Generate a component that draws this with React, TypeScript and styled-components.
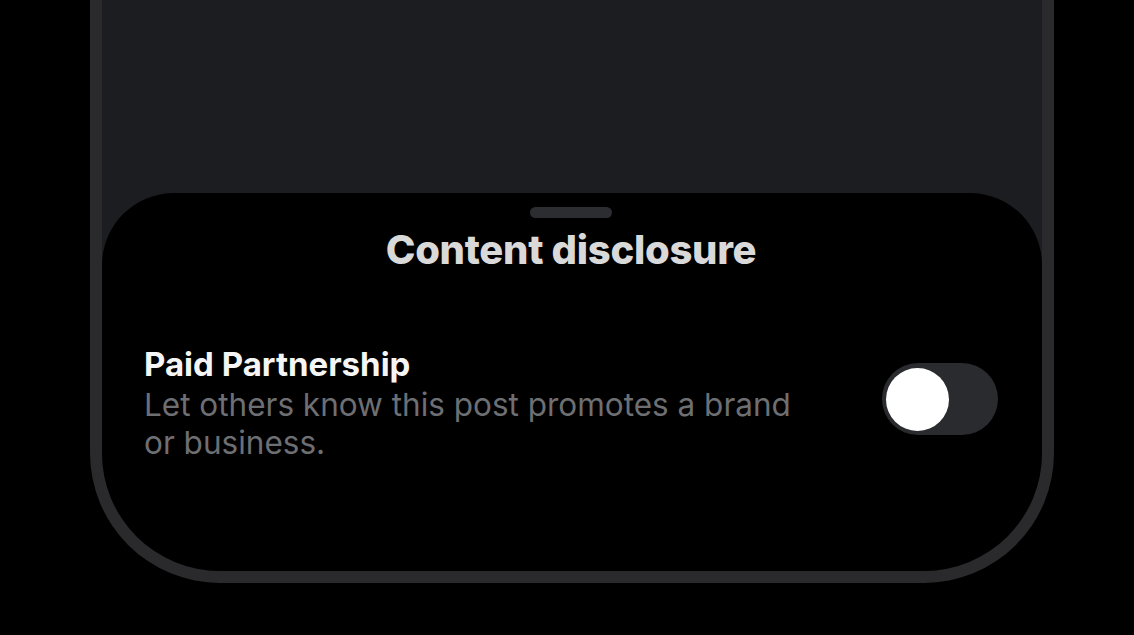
import React, { useState } from "react";
import styled, { createGlobalStyle } from "styled-components";

const GlobalStyle = createGlobalStyle`
  html, body {
    margin: 0;
    padding: 0;
    background: #000;
    font-family: Inter, "Noto Sans", sans-serif;
  }
`;

const Page = styled.div`
  width: 1134px;
  height: 635px;
  overflow: hidden;
  background: #000;
  padding-left: 90px;
  box-sizing: border-box;
`;

const PhoneFrame = styled.div`
  width: 964px;
  height: 583px;
  box-sizing: border-box;
  border: 12px solid #2a2a2c;
  border-top: none;
  border-radius: 0 0 130px 130px;
  background: #1c1d21;
  overflow: hidden;
  display: flex;
  flex-direction: column;
`;

const Backdrop = styled.div`
  height: 193px;
  flex-shrink: 0;
`;

const Sheet = styled.div`
  flex: 1;
  background: #000;
  border-radius: 72px 72px 0 0;
  display: flex;
  flex-direction: column;
  align-items: center;
  padding: 14px 44px 0 42px;
`;

const Handle = styled.div`
  width: 82px;
  height: 11px;
  border-radius: 6px;
  background: #2c2d31;
`;

const Title = styled.h1`
  margin: 8px 0 0;
  font-size: 40px;
  font-weight: 800;
  letter-spacing: -0.3px;
  color: #d9d9d9;
  line-height: 48px;
`;

const Row = styled.div`
  align-self: stretch;
  display: flex;
  align-items: center;
  justify-content: space-between;
  margin-top: 68px;
`;

const TextBlock = styled.div`
  display: flex;
  flex-direction: column;
  max-width: 680px;
`;

const Label = styled.div`
  font-size: 33px;
  font-weight: 700;
  color: #f5f5f5;
  line-height: 44px;
`;

const Description = styled.div`
  font-size: 31.5px;
  font-weight: 400;
  color: #6d6f73;
  line-height: 38px;
`;

const Track = styled.button<{ $on: boolean }>`
  width: 116px;
  height: 72px;
  border: none;
  padding: 4px;
  border-radius: 36px;
  background: ${(p) => (p.$on ? "#1d9bf0" : "#2a2b2f")};
  display: flex;
  justify-content: ${(p) => (p.$on ? "flex-end" : "flex-start")};
  align-items: center;
  cursor: pointer;
  margin-top: -6px;
`;

const Knob = styled.span`
  width: 63px;
  height: 63px;
  border-radius: 50%;
  background: #fff;
`;

const App = () => {
  const [paid, setPaid] = useState(false);

  return (
    <Page>
      <GlobalStyle />
      <PhoneFrame>
        <Backdrop />
        <Sheet>
          <Handle />
          <Title>Content disclosure</Title>
          <Row>
            <TextBlock>
              <Label>Paid Partnership</Label>
              <Description>
                Let others know this post promotes a brand or business.
              </Description>
            </TextBlock>
            <Track $on={paid} onClick={() => setPaid(!paid)}>
              <Knob />
            </Track>
          </Row>
        </Sheet>
      </PhoneFrame>
    </Page>
  );
};

export default App;
